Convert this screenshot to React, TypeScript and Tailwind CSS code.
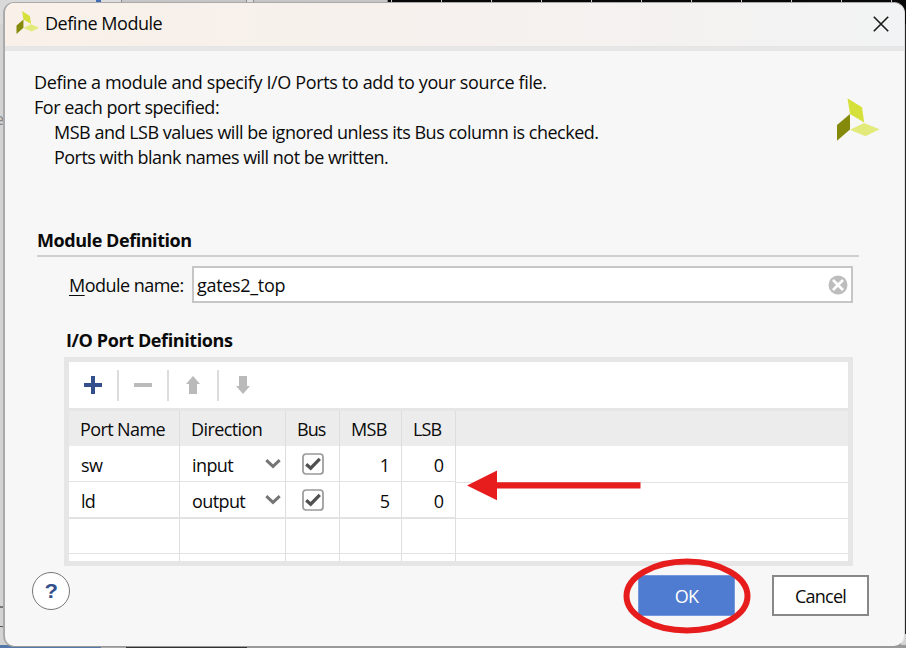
import { type ReactNode } from "react";

function Logo({ className }: { className: string }) {
  return (
    <svg className={className} viewBox="0 0 43 43">
      <polygon points="10.5,0.2 25,9.3 27.2,24.5 13,16" fill="#d6e03a" />
      <polygon points="0,27 13,16 13,31.5 0,42.8" fill="#868a0a" />
      <polygon points="13,31.8 27,25 42.6,31.3 28.5,38.2" fill="#e3ea7c" />
    </svg>
  );
}

function Chevron() {
  return (
    <svg className="block h-[12px] w-[16px]" viewBox="0 0 16 12">
      <path d="M1.3 2.2 L8 8.4 L14.7 2.2" fill="none" stroke="#757575" strokeWidth="3" />
    </svg>
  );
}

function Checkbox() {
  return (
    <svg className="block h-[22px] w-[22px]" viewBox="0 0 22 22">
      <rect x="1" y="1" width="20" height="20" rx="3" fill="#fff" stroke="#999" strokeWidth="1.7" />
      <path d="M4.2 11.2 L8.7 15.2 L17.8 5.8" fill="none" stroke="#505050" strokeWidth="3.2" />
    </svg>
  );
}

function Separator() {
  return <div className="h-[31px] w-[2px] bg-[#dcdcdc]" />;
}

function Cell({ className, children }: { className: string; children?: ReactNode }) {
  return <div className={"flex shrink-0 items-center border-r border-[#dedede] " + className}>{children}</div>;
}

const rows = [
  { name: "sw", dir: "input", msb: "1", height: "h-[36px]", line: "border-b", restHeight: "h-[37px]" },
  { name: "ld", dir: "output", msb: "5", height: "h-[37px]", line: "border-b-2", restHeight: "h-[36px]" },
];

function PortTable() {
  return (
    <div className="ml-[59px] h-[209px] w-[789px] border-5 border-[#e6e6e6] bg-white">
      <div className="flex h-[46px] items-center">
        <div className="flex w-[48px] justify-center">
          <svg className="h-[18px] w-[18px]" viewBox="0 0 18 18">
            <path d="M9 0V18M0 9H18" stroke="#34508c" strokeWidth="4" />
          </svg>
        </div>
        <Separator />
        <div className="flex w-[48px] justify-center">
          <svg className="h-[18px] w-[18px]" viewBox="0 0 18 18">
            <path d="M0 9H18" stroke="#bbb" strokeWidth="4" />
          </svg>
        </div>
        <Separator />
        <div className="flex w-[48px] justify-center">
          <svg className="h-[18px] w-[14px]" viewBox="0 0 14 18">
            <path d="M7 0L14 8H11V18H3V8H0Z" fill="#bababa" />
          </svg>
        </div>
        <Separator />
        <div className="flex w-[48px] justify-center">
          <svg className="h-[18px] w-[14px]" viewBox="0 0 14 18">
            <path d="M7 18L14 10H11V0H3V10H0Z" fill="#bababa" />
          </svg>
        </div>
      </div>
      <div className="flex h-[38px] border-t-3 border-[#e6e6e6] bg-[#ececec] leading-[34px]">
        <Cell className="w-[111px] pt-px pl-[11px] tracking-[-0.6px]">Port Name</Cell>
        <Cell className="w-[106px] pt-px pl-[11px] tracking-[-0.6px]">Direction</Cell>
        <Cell className="w-[54px] pt-px pl-[11px] tracking-[-1px]">Bus</Cell>
        <Cell className="w-[62px] pt-px pl-[11px] tracking-[-0.7px]">MSB</Cell>
        <Cell className="w-[54px] pt-px pl-[11px] tracking-[-0.9px]">LSB</Cell>
      </div>
      <div className="flex">
        <div className="w-[387px]">
          {rows.map((r) => (
            <div key={r.name} className={"flex border-[#e2e2e2] " + r.height + " " + r.line}>
              <Cell className="w-[111px] pt-[3px] pl-[12px] tracking-[-0.7px]">{r.name}</Cell>
              <Cell className="w-[106px] justify-between pr-[4px] pl-[12px]">
                <span className="pt-[3px] tracking-[-0.6px]">{r.dir}</span>
                <Chevron />
              </Cell>
              <Cell className="w-[54px] justify-center">
                <Checkbox />
              </Cell>
              <Cell className="w-[62px] justify-end pt-[3px] pr-[11px]">{r.msb}</Cell>
              <Cell className="w-[54px] justify-end pt-[3px] pr-[11px]">0</Cell>
            </div>
          ))}
          {["h-[35px] border-b", "h-[7px]"].map((c) => (
            <div key={c} className={"flex border-[#e2e2e2] " + c}>
              <Cell className="w-[111px]" />
              <Cell className="w-[106px]" />
              <Cell className="w-[54px]" />
              <Cell className="w-[62px]" />
              <Cell className="w-[54px]" />
            </div>
          ))}
        </div>
        <div className="flex-1">
          {rows.map((r) => (
            <div key={r.name} className={"border-b border-[#e2e2e2] " + r.restHeight} />
          ))}
          <div className="h-[35px] border-b border-[#e2e2e2]" />
        </div>
      </div>
    </div>
  );
}

export default function App() {
  return (
    <div className="relative h-[648px] w-[906px] overflow-hidden bg-[#d3d3d3] font-['Open_Sans','Noto_Sans',sans-serif] text-[18px] text-[#0a0a0a]">
      <div className="flex h-[24px]">
        <div className="w-[96px] bg-[#d9d9d9]" />
        <div className="w-[5px] bg-[#416cb2]" />
        <div className="w-[20px] bg-[#dcdcdc]" />
        <div className="w-[126px] border-x border-[#888] bg-[#c6c6c6]" />
        <div className="w-[6px] bg-[#dcdcdc]" />
        <div className="w-[135px] border-x border-[#888] bg-[#c6c6c6]" />
        <div className="flex flex-1 gap-[49px] bg-[#080808] pl-[3px]">
          {[0, 1, 2, 3, 4, 5, 6, 7, 8, 9, 10].map((n) => (
            <div key={n} className="w-px shrink-0 bg-[#c8c8c8]" />
          ))}
        </div>
      </div>
      <div className="absolute top-[108px] left-[-5px] text-[16px] leading-[22px] text-[#888]">es</div>
      <div className="absolute top-[606px] left-0 h-[2px] w-[5px] bg-[#777]" />
      <div className="absolute top-[626px] left-[-6px] h-[14px] w-[11px] rounded-tr-[3px] border-t border-r border-[#555]" />
      <div className="absolute top-[24px] right-0 h-[610px] w-[10px] bg-[#262626]" />
      <div className="absolute top-[645px] left-0 flex h-[3px] w-full bg-[#999]">
        <div className="w-[101px] bg-[#5578aa]" />
        <div className="w-[25px] bg-[#aaa]" />
        <div className="w-[121px] bg-[#333]" />
      </div>

      <div className="absolute top-[2px] left-[3px] flex h-[645px] w-[902px] flex-col overflow-hidden rounded-[11px] border-t border-r border-b border-l-2 border-t-[#aaa] border-r-[#ddd] border-b-[#999] border-l-[#aaa] bg-[#f7f7f7]">
        <header className="flex h-[48px] shrink-0 items-start border-b-5 border-[#e6e6e6] bg-linear-to-r from-[#f9f1e9] via-[#f6f1ee] to-[#f2f3f4] pl-[11px]">
          <Logo className="mt-[8px] h-[23px] w-[24px]" />
          <h1 className="mt-[8px] ml-[5px] w-[700px] leading-[25px] tracking-[-0.47px]">Define Module</h1>
          <svg className="mt-[13px] ml-[127.5px] h-[16px] w-[16px]" viewBox="0 0 16 16">
            <path d="M0.8 0.8L15.2 15.2M15.2 0.8L0.8 15.2" stroke="#1a1a1a" strokeWidth="1.6" />
          </svg>
        </header>

        <main className="flex-1">
          <div className="flex h-[176px] pt-[19px] pl-[29px]">
            <div className="w-[803px] leading-[25px] whitespace-nowrap">
              <p className="tracking-[-0.36px]">Define a module and specify I/O Ports to add to your source file.</p>
              <p className="tracking-[-0.46px]">For each port specified:</p>
              <p className="pl-[20px] tracking-[-0.485px]">MSB and LSB values will be ignored unless its Bus column is checked.</p>
              <p className="pl-[20px] tracking-[-0.52px]">Ports with blank names will not be written.</p>
            </div>
            <Logo className="mt-[28px] h-[43px] w-[43px]" />
          </div>
          <h2 className="ml-[32px] h-[30px] w-[822px] border-b-2 border-[#cfcfcf] leading-[27px] font-bold tracking-[-0.44px]">
            Module Definition
          </h2>
          <div className="mt-[9px] flex h-[38px] items-start pl-[64px]">
            <label className="w-[123px] pt-[6px] tracking-[-0.53px]">
              <span className="underline decoration-1 underline-offset-[3px]">M</span>odule name:
            </label>
            <div className="flex h-[37px] w-[661px] items-center justify-between border-2 border-[#c6c6c6] bg-white pr-[3px] pl-[3px]">
              <span className="pt-[2px] tracking-[-0.32px]">gates2_top</span>
              <svg className="h-[20px] w-[20px]" viewBox="0 0 20 20">
                <circle cx="10" cy="10" r="9.5" fill="#bdbdbd" />
                <path d="M5 5L15 15M15 5L5 15" stroke="#fff" strokeWidth="2.6" />
              </svg>
            </div>
          </div>
          <h3 className="mt-[23px] ml-[61px] h-[30px] leading-[27px] font-bold tracking-[-0.4px]">I/O Port Definitions</h3>
          <PortTable />
          <footer className="flex pl-[27px]">
            <button className="mt-[6px] flex h-[38px] w-[38px] items-center justify-center rounded-full border border-[#777] bg-white font-['Liberation_Sans',sans-serif] text-[20px] font-bold text-[#34508c]">
              <span className="scale-x-110">?</span>
            </button>
            <button className="mt-[9px] ml-[568px] h-[41px] w-[97px] border border-[#7599dc] bg-[#4f7bd0] pt-[2px] tracking-[-0.8px] text-white">
              OK
            </button>
            <button className="mt-[9px] ml-[37px] h-[41px] w-[97px] border-2 border-[#888] bg-white pt-[2px] tracking-[-0.75px]">Cancel</button>
          </footer>
        </main>
      </div>

      <svg className="absolute top-[469px] left-[466px] h-[32px] w-[176px]" viewBox="0 0 176 32">
        <path d="M1 16.5L31 1.5V13.3H174.5V19.5H31V31.3Z" fill="#e71d1d" />
      </svg>
      <svg className="absolute top-[557px] left-[622px] h-[78px] w-[130px]" viewBox="0 0 130 78">
        <ellipse cx="65" cy="39" rx="60.5" ry="34.5" fill="none" stroke="#e71d1d" strokeWidth="6" />
      </svg>
    </div>
  );
}
